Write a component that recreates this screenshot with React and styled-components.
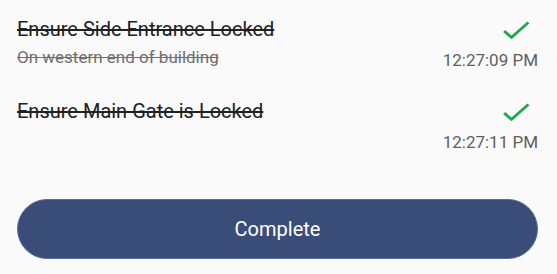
import React from "react";
import styled, { createGlobalStyle } from "styled-components";

const GlobalStyle = createGlobalStyle`
  html, body {
    margin: 0;
    padding: 0;
    background: #fafafa;
  }
  body {
    font-family: Roboto, "Noto Sans", sans-serif;
  }
`;

const items = [
  {
    title: "Ensure Side Entrance Locked",
    note: "On western end of building",
    time: "12:27:09 PM",
  },
  {
    title: "Ensure Main Gate is Locked",
    time: "12:27:11 PM",
  },
];

const CheckIcon = () => (
  <svg
    width="36"
    height="32"
    viewBox="0 0 24 24"
    preserveAspectRatio="none"
    fill="#1ea84b"
  >
    <path d="M9 16.17L4.83 12l-1.42 1.41L9 19 21 7l-1.41-1.41z" />
  </svg>
);

const App = () => {
  return (
    <Page>
      <GlobalStyle />
      <List>
        {items.map((item) => (
          <Row key={item.title}>
            <Texts>
              <Title>{item.title}</Title>
              {item.note && <Note>{item.note}</Note>}
            </Texts>
            <Side>
              <CheckIcon />
              <Time>{item.time}</Time>
            </Side>
          </Row>
        ))}
      </List>
      <CompleteButton>Complete</CompleteButton>
    </Page>
  );
};

export default App;

const Page = styled.div`
  width: 557px;
  height: 274px;
  box-sizing: border-box;
  padding: 0 19px 0 17px;
  display: flex;
  flex-direction: column;
  background: #fafafa;
`;

const List = styled.div`
  display: flex;
  flex-direction: column;
`;

const Row = styled.div`
  display: flex;
  justify-content: space-between;
  align-items: flex-start;
  height: 82px;
`;

const Texts = styled.div`
  display: flex;
  flex-direction: column;
  gap: 6px;
  padding-top: 17px;
`;

const Title = styled.div`
  font-size: 20px;
  line-height: 24px;
  color: #212121;
  text-decoration: line-through;
`;

const Note = styled.div`
  font-size: 17px;
  line-height: 20px;
  color: #6f6f6f;
  text-decoration: line-through;
`;

const Side = styled.div`
  display: flex;
  flex-direction: column;
  align-items: flex-end;
  padding-top: 14px;

  svg {
    margin-right: 4px;
    margin-bottom: 4px;
  }
`;

const Time = styled.div`
  font-size: 17px;
  line-height: 20px;
  color: #5f5f5f;
`;

const CompleteButton = styled.button`
  margin-top: 35px;
  height: 60px;
  width: 100%;
  border: 1px solid #5a6c98;
  border-radius: 30px;
  background: #3a4d78;
  color: #ffffff;
  font-family: Roboto, "Noto Sans", sans-serif;
  font-size: 20px;
  cursor: pointer;
`;
